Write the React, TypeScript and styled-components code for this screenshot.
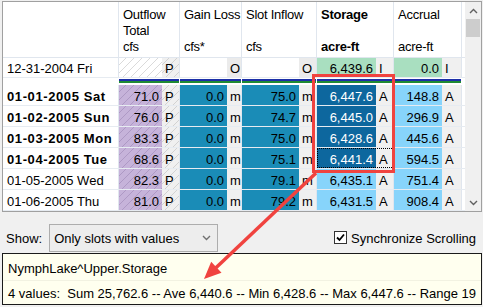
import React from 'react';
import styled, { createGlobalStyle } from 'styled-components';

const GlobalStyle = createGlobalStyle`
  html, body { margin: 0; padding: 0; background: #f0f0f0; }
  body { font-family: "Liberation Sans", Arial, sans-serif; font-size: 13px; color: #000; }
  #root { width: 483px; height: 307px; overflow: hidden; }
`;

type Kind = 'hatch' | 'purple' | 'white' | 'teal' | 'green' | 'sel' | 'light' | 'gray' | 'grayHatch' | 'grayO';

const HATCH = (line: string) => `repeating-linear-gradient(135deg, transparent 0 4.6px, ${line} 4.6px 5.6px)`;

const BG: Record<Kind, string> = {
  hatch: `${HATCH('#dadada')}, #ffffff`,
  purple: `${HATCH('rgba(110,85,140,0.28)')}, #c6b3da`,
  white: '#ffffff',
  teal: '#1a8cb7',
  green: '#a9dfc0',
  sel: '#0d679e',
  light: '#87d4fb',
  gray: '#f0f0f0',
  grayHatch: `${HATCH('#d2d2d2')}, #f0f0f0`,
  grayO: '#ebebeb',
};

const COLS = '116px 61px 62px 75px 77px 68px 3px';
const LINE = '#e0e6ee';

const Page = styled.div`
  position: relative;
  width: 483px;
  height: 307px;
  box-sizing: border-box;
  padding-top: 1px;
  display: flex;
  flex-direction: column;
`;

const Frame = styled.div`
  margin-left: 2px;
  width: 480px;
  height: 211px;
  box-sizing: border-box;
  border: 1px solid #a0a0a0;
  background: #fff;
  display: flex;
`;

const TableArea = styled.div`
  width: 462px;
  overflow: hidden;
  display: flex;
  flex-direction: column;
`;

const HeaderRow = styled.div`
  display: grid;
  grid-template-columns: ${COLS};
  height: 56px;
  box-sizing: border-box;
  border-bottom: 1px solid ${LINE};
  flex-shrink: 0;
`;

const HeaderCell = styled.div<{ $bold?: boolean; $last?: boolean }>`
  box-sizing: border-box;
  padding: 5px 0 0 4px;
  border-right: ${(p) => (p.$last ? 'none' : `1px solid ${LINE}`)};
  font-weight: ${(p) => (p.$bold ? 700 : 400)};
  letter-spacing: -0.25px;
  white-space: nowrap;
  overflow: hidden;
`;

const HeaderLine = styled.div`
  height: 16px;
  line-height: 16px;
`;

const DataRow = styled.div<{ $h: number }>`
  display: grid;
  grid-template-columns: ${COLS};
  height: ${(p) => p.$h}px;
  box-sizing: border-box;
  border-bottom: 1px solid #e6ebf1;
  flex-shrink: 0;
`;

const DateCell = styled.div<{ $bold?: boolean }>`
  box-sizing: border-box;
  display: flex;
  align-items: center;
  padding: 3px 0 0 4px;
  line-height: 16px;
  border-right: 1px solid ${LINE};
  font-weight: ${(p) => (p.$bold ? 700 : 400)};
  letter-spacing: ${(p) => (p.$bold ? '0.6px' : '0')};
  white-space: nowrap;
  overflow: hidden;
`;

const Group = styled.div<{ $v: number; $focus?: boolean }>`
  display: grid;
  grid-template-columns: ${(p) => p.$v}px 1fr;
  border-right: 1px solid ${LINE};
  outline: ${(p) => (p.$focus ? '1px dotted #000' : 'none')};
  outline-offset: -1px;
`;

const ValueCell = styled.div<{ $kind: Kind }>`
  box-sizing: border-box;
  display: flex;
  align-items: center;
  justify-content: flex-end;
  padding: 3px 3px 0 0;
  line-height: 16px;
  background: ${(p) => BG[p.$kind]};
  color: ${(p) => (p.$kind === 'sel' ? '#ffffff' : '#000000')};
  white-space: nowrap;
`;

const FlagCell = styled.div<{ $kind: Kind }>`
  box-sizing: border-box;
  display: flex;
  align-items: center;
  padding: 3px 0 0 3px;
  line-height: 16px;
  background: ${(p) => BG[p.$kind]};
`;

const Filler = styled.div``;

const BandRow = styled.div`
  display: grid;
  grid-template-columns: ${COLS};
  height: 7px;
  flex-shrink: 0;
`;

const BandCell = styled.div<{ $lines?: boolean }>`
  border-right: 1px solid #fff;
  background: ${(p) =>
    p.$lines
      ? 'linear-gradient(to bottom, #fff 0 1px, #1c2fa8 1px 3px, #fff 3px 3.4px, #1f8a34 3.4px 5px, #fff 5px)'
      : '#fff'};
`;

const ScrollBar = styled.div`
  width: 16px;
  background: #f0f0f0;
  display: flex;
  flex-direction: column;
  align-items: center;
`;

const ScrollBtn = styled.div`
  width: 16px;
  height: 17px;
  display: flex;
  align-items: center;
  justify-content: center;
  flex-shrink: 0;
`;

const Thumb = styled.div`
  width: 14px;
  height: 18px;
  background: #cdcdcd;
  flex-shrink: 0;
`;

const Track = styled.div`
  flex: 1;
`;

const Controls = styled.div`
  margin-top: 12px;
  height: 28px;
  display: flex;
  align-items: center;
  flex-shrink: 0;
`;

const ShowLabel = styled.span`
  margin-left: 6px;
`;

const Combo = styled.div`
  margin-left: 7px;
  width: 169px;
  height: 28px;
  box-sizing: border-box;
  border: 1px solid #adadad;
  background: #ededed;
  display: flex;
  align-items: center;
  justify-content: space-between;
  padding: 0 6px 0 4px;
`;

const CheckGroup = styled.label`
  margin-left: auto;
  padding-right: 7px;
  display: flex;
  align-items: center;
  gap: 4px;
`;

const CheckBox = styled.span`
  width: 13px;
  height: 13px;
  box-sizing: border-box;
  border: 1px solid #333;
  background: #fff;
  display: flex;
  align-items: center;
  justify-content: center;
  margin-top: -1px;
`;

const InfoBox = styled.div`
  margin: 1px 0 0 2px;
  width: 480px;
  height: 52px;
  box-sizing: border-box;
  border: 1px solid #1a1a1a;
  background: #ffffef;
  display: flex;
  flex-direction: column;
  flex-shrink: 0;
`;

const InfoLine = styled.div<{ $h: number; $sep?: boolean }>`
  height: ${(p) => p.$h}px;
  box-sizing: border-box;
  padding: 2px 0 0 5px;
  display: flex;
  align-items: center;
  white-space: pre;
  overflow: hidden;
  border-top: ${(p) => (p.$sep ? '1px solid #f2f2e2' : 'none')};
`;

const RedBox = styled.div`
  position: absolute;
  left: 312px;
  top: 74px;
  width: 83px;
  height: 99px;
  box-sizing: border-box;
  border: 3px solid #f0433f;
  pointer-events: none;
`;

const ArrowLayer = styled.svg`
  position: absolute;
  left: 0;
  top: 0;
  pointer-events: none;
`;

type Cell = [string, Kind, string, Kind];

interface Row {
  date: string;
  bold?: boolean;
  focus?: boolean;
  cells: Cell[];
}

const VW = [43, 47, 57, 59, 48];

const headers: { lines: string[]; bold?: boolean }[] = [
  { lines: ['Outflow', 'Total', 'cfs'] },
  { lines: ['Gain Loss', '', 'cfs*'] },
  { lines: ['Slot Inflow', '', 'cfs'] },
  { lines: ['Storage', '', 'acre-ft'], bold: true },
  { lines: ['Accrual', '', 'acre-ft'] },
];

const first: Row = {
  date: '12-31-2004 Fri',
  cells: [
    ['', 'hatch', 'P', 'grayHatch'],
    ['', 'white', 'O', 'grayO'],
    ['', 'white', 'O', 'grayO'],
    ['6,439.6', 'green', 'I', 'gray'],
    ['0.0', 'green', 'I', 'gray'],
  ],
};

const mk = (date: string, o: string, s: string, st: string, a: string, sel: boolean, bold: boolean, focus = false): Row => ({
  date,
  bold,
  focus,
  cells: [
    [o, 'purple', 'P', 'grayHatch'],
    ['0.0', 'teal', 'm', 'gray'],
    [s, 'teal', 'm', 'gray'],
    [st, sel ? 'sel' : 'light', 'A', 'gray'],
    [a, 'light', 'A', 'gray'],
  ],
});

const rows: Row[] = [
  mk('01-01-2005 Sat', '71.0', '75.0', '6,447.6', '148.8', true, true),
  mk('01-02-2005 Sun', '76.0', '74.7', '6,445.0', '296.9', true, true),
  mk('01-03-2005 Mon', '83.3', '75.0', '6,428.6', '445.6', true, true),
  mk('01-04-2005 Tue', '68.6', '75.1', '6,441.4', '594.5', true, true, true),
  mk('01-05-2005 Wed', '82.3', '79.1', '6,435.1', '751.4', false, false),
  mk('01-06-2005 Thu', '81.0', '79.2', '6,431.5', '908.4', false, false),
];

const Chevron = ({ up, color = '#606060' }: { up?: boolean; color?: string }) => (
  <svg width="9" height="6" viewBox="0 0 9 6">
    <polyline
      points={up ? '1,5 4.5,1.5 8,5' : '1,1 4.5,4.5 8,1'}
      fill="none"
      stroke={color}
      strokeWidth="1.4"
    />
  </svg>
);

const TableRow = ({ row, h }: { row: Row; h: number }) => (
  <DataRow $h={h}>
    <DateCell $bold={row.bold}>{row.date}</DateCell>
    {row.cells.map((c, i) => (
      <Group key={i} $v={VW[i]} $focus={row.focus && i === 3}>
        <ValueCell $kind={c[1]}>{c[0]}</ValueCell>
        <FlagCell $kind={c[3]}>{c[2]}</FlagCell>
      </Group>
    ))}
    <Filler />
  </DataRow>
);

export default function App() {
  const sx = 316, sy = 173, tx = 204, ty = 279;
  const dx = tx - sx, dy = ty - sy;
  const len = Math.hypot(dx, dy);
  const ux = dx / len, uy = dy / len;
  const hl = 17, hw = 7.5;
  const bx = tx - ux * hl, by = ty - uy * hl;
  const nx = -uy, ny = ux;
  const head = `${tx},${ty} ${bx + nx * hw},${by + ny * hw} ${bx - nx * hw},${by - ny * hw}`;

  return (
    <Page>
      <GlobalStyle />
      <Frame>
        <TableArea>
          <HeaderRow>
            <HeaderCell />
            {headers.map((h, i) => (
              <HeaderCell key={i} $bold={h.bold}>
                {h.lines.map((l, j) => (
                  <HeaderLine key={j}>{l || '\u00a0'}</HeaderLine>
                ))}
              </HeaderCell>
            ))}
            <HeaderCell $last />
          </HeaderRow>
          <TableRow row={first} h={20} />
          <BandRow>
            <BandCell />
            <BandCell $lines />
            <BandCell $lines />
            <BandCell $lines />
            <BandCell $lines />
            <BandCell $lines />
            <BandCell />
          </BandRow>
          {rows.map((r) => (
            <TableRow key={r.date} row={r} h={21} />
          ))}
        </TableArea>
        <ScrollBar>
          <ScrollBtn>
            <Chevron up />
          </ScrollBtn>
          <Thumb />
          <Track />
          <ScrollBtn>
            <Chevron />
          </ScrollBtn>
        </ScrollBar>
      </Frame>
      <Controls>
        <ShowLabel>Show:</ShowLabel>
        <Combo>
          <span>Only slots with values</span>
          <Chevron color="#707070" />
        </Combo>
        <CheckGroup>
          <CheckBox>
            <svg width="11" height="11" viewBox="0 0 11 11">
              <polyline points="2,5.5 4.5,8 9,2.5" fill="none" stroke="#000" strokeWidth="1.8" />
            </svg>
          </CheckBox>
          <span>Synchronize Scrolling</span>
        </CheckGroup>
      </Controls>
      <InfoBox>
        <InfoLine $h={26}>NymphLake^Upper.Storage</InfoLine>
        <InfoLine $h={24} $sep>
          {'4 values:  Sum 25,762.6 -- Ave 6,440.6 -- Min 6,428.6 -- Max 6,447.6 -- Range 19'}
        </InfoLine>
      </InfoBox>
      <RedBox />
      <ArrowLayer width="483" height="307" viewBox="0 0 483 307">
        <line x1={sx} y1={sy} x2={bx + ux * 2} y2={by + uy * 2} stroke="#f0433f" strokeWidth="3.5" />
        <polygon points={head} fill="#f0433f" />
      </ArrowLayer>
    </Page>
  );
}
